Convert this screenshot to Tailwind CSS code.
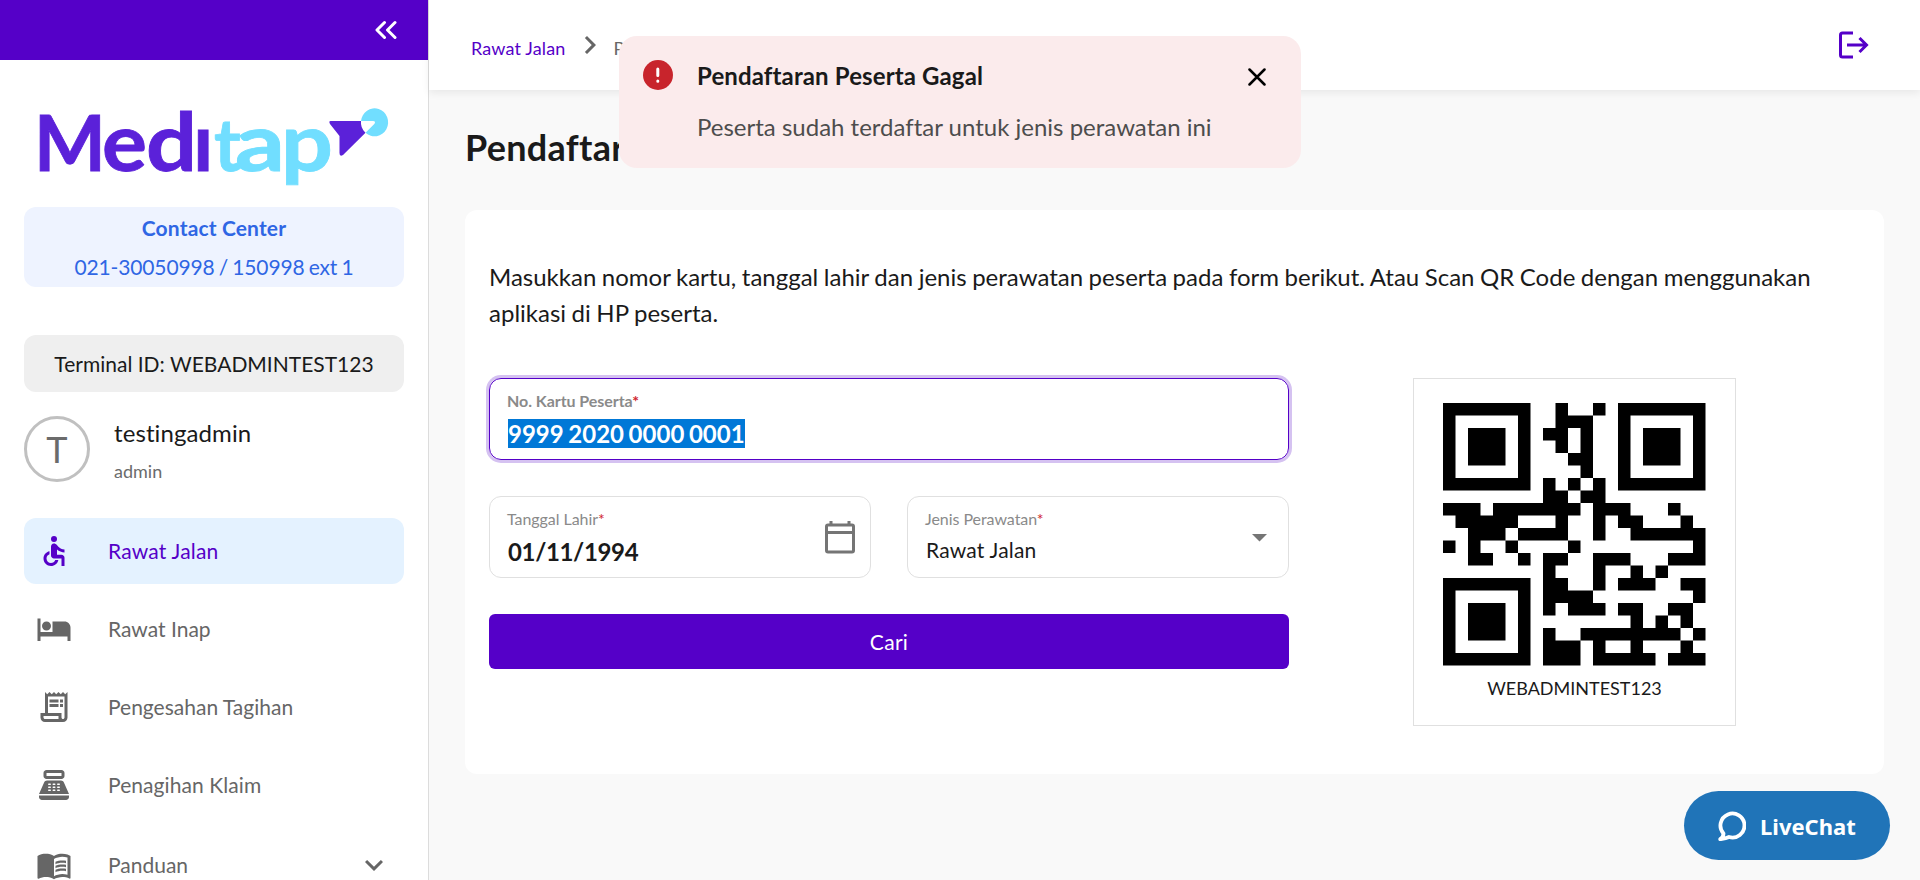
<!DOCTYPE html>
<html lang="id">
<head>
<meta charset="utf-8">
<title>Meditap - Pendaftaran Peserta</title>
<script src="https://cdn.jsdelivr.net/npm/@tailwindcss/browser@4"></script>
</head>
<body class="h-[880px] overflow-hidden bg-[#f9f9f9] font-['Lato',sans-serif] text-[#1a1a1a] [font-variant-ligatures:none]">
<div class="flex h-[880px]">
  <aside class="flex w-[429px] shrink-0 flex-col overflow-hidden border-r border-[#dcdcdc] bg-white">
    <div class="-mr-px flex h-[60px] shrink-0 items-center justify-end bg-[#5500c8] pr-8">
      <svg class="h-6 w-6" viewBox="0 0 24 24" fill="none" stroke="#fff" stroke-width="3" stroke-linecap="round" stroke-linejoin="round"><path d="M11.500 4.500 4 12l7.500 7.500M22 4.500 14.500 12l7.500 7.500"/></svg>
    </div>
    <div class="h-[147px] shrink-0">
      <svg class="h-[147px] w-[428px]" viewBox="0 60 428 147">
        <g font-family="Lato" font-weight="700" font-size="80" fill="#5b21d9" stroke="#5b21d9" stroke-width=".8">
          <text x="34" y="171" font-size="76">M</text>
          <text x="102" y="171" textLength="45" lengthAdjust="spacingAndGlyphs">e</text>
          <text x="146" y="171" textLength="51" lengthAdjust="spacingAndGlyphs">d</text>
          <text x="193" y="171">ı</text>
        </g>
        <g font-family="Lato" font-weight="700" font-size="80" fill="#71deff" stroke="#71deff" stroke-width=".8">
          <text x="214" y="171" font-size="72">t</text>
          <text x="235" y="171" textLength="50" lengthAdjust="spacingAndGlyphs">a</text>
          <text x="281" y="171" textLength="52" lengthAdjust="spacingAndGlyphs">p</text>
        </g>
        <path d="M330.500 121H361a14 14 0 0 0 4.500 11.800L343 155q-3.500 2-3.500-2V136l-9.500-12q-1.500-3 .5-3z" fill="#5b21d9"/>
        <path d="M361 121a13.600 14 0 1 1 4.500 11.800l9-9q1.500-2.800-1.500-2.800z" fill="#71deff"/>
      </svg>
    </div>
    <div class="mx-6 flex h-20 shrink-0 flex-col justify-center rounded-xl bg-[#eef3ff] text-center text-[21px] leading-[39px] text-[#2f66e4]">
      <div class="font-bold tracking-[0.15px]">Contact Center</div>
      <div class="tracking-[-0.15px] [word-spacing:-1px]">021-30050998 / 150998 ext 1</div>
    </div>
    <div class="mx-6 mt-12 h-[57px] shrink-0 rounded-xl bg-[#efefef] text-center text-[21px] leading-[57px]">Terminal ID: WEBADMINTEST123</div>
    <div class="mx-6 mt-6 flex h-[66px] shrink-0 items-center gap-6">
      <div class="h-[66px] w-[66px] rounded-full border-3 border-[#c0c0c0] text-center text-[36px] leading-[60px] text-[#6b6b6b]">T</div>
      <div class="pt-1.5">
        <div class="text-2xl leading-[38px] tracking-[0.1px]">testingadmin</div>
        <div class="text-lg leading-[38px] text-[#6b6b6b]">admin</div>
      </div>
    </div>
    <nav class="mx-6 mt-9 flex flex-col gap-3 text-[21px] text-[#666]">
      <a class="flex h-[66px] items-center gap-9 rounded-xl bg-[#e4f2ff] px-3 text-[#5500c8]">
        <svg class="h-9 w-9" viewBox="0 0 24 24" fill="currentColor"><circle cx="12" cy="4" r="2"/><path d="M19 13v-2c-1.540.02-3.090-.75-4.070-1.830l-1.290-1.430c-.17-.19-.38-.34-.61-.45-.01 0-.01-.01-.02-.01H13c-.35-.2-.75-.3-1.190-.26C10.760 7.110 10 8.040 10 9.090V15c0 1.100.9 2 2 2h5v5h2v-5.500c0-1.100-.9-2-2-2h-3v-3.450c1.290 1.070 3.250 1.940 5 1.950zm-6.170 5c-.41 1.160-1.520 2-2.830 2-1.660 0-3-1.340-3-3 0-1.310.84-2.410 2-2.830V12.100c-2.280.46-4 2.480-4 4.900 0 2.760 2.240 5 5 5 2.420 0 4.440-1.720 4.900-4h-2.070z"/></svg>
        <span class="tracking-[0.2px]">Rawat Jalan</span>
      </a>
      <a class="flex h-[66px] items-center gap-9 px-3">
        <svg class="h-9 w-9" viewBox="0 0 24 24" fill="currentColor"><path d="M7 13c1.660 0 3-1.340 3-3S8.660 7 7 7s-3 1.340-3 3 1.340 3 3 3zm12-6h-8v7H3V5H1v15h2v-3h18v3h2v-9c0-2.210-1.790-4-4-4z"/></svg>
        <span>Rawat Inap</span>
      </a>
      <a class="flex h-[66px] items-center gap-9 px-3">
        <svg class="h-9 w-9" viewBox="0 0 24 24" fill="currentColor"><path d="M19.500 3.500 18 2l-1.500 1.500L15 2l-1.500 1.500L12 2l-1.500 1.500L9 2 7.500 3.500 6 2v14H3v3c0 1.660 1.340 3 3 3h12c1.660 0 3-1.340 3-3V2l-1.500 1.500zM15 20H6c-.55 0-1-.45-1-1v-1h10v2zm4-1c0 .55-.45 1-1 1s-1-.45-1-1v-3H8V5h11v14zM9 7h6v2H9zM16 7h2v2h-2zM9 10h6v2H9zM16 10h2v2h-2z"/></svg>
        <span>Pengesahan Tagihan</span>
      </a>
      <a class="flex h-[66px] items-center gap-9 px-3">
        <svg class="h-9 w-9" viewBox="0 0 24 24"><path fill="currentColor" d="M17 2H7c-1.100 0-2 .9-2 2v2c0 1.100.9 2 2 2h10c1.100 0 2-.9 2-2V4c0-1.100-.9-2-2-2zm0 4H7V4h10v2zm3 16H4c-1.100 0-2-.9-2-2v-1h20v1c0 1.100-.9 2-2 2zm-1.470-11.810C18.210 9.470 17.490 9 16.700 9H7.300c-.79 0-1.510.47-1.830 1.190L2 18h20l-3.470-7.810z"/><path d="M8.500 11.500h1m2 0h1m2 0h1m-7 2h1m2 0h1m2 0h1m-7 2h1m2 0h1m2 0h1" stroke="#fff" stroke-linecap="round"/></svg>
        <span class="tracking-[0.08px]">Penagihan Klaim</span>
      </a>
      <a class="flex h-[69px] items-center gap-9 px-3">
        <svg class="h-9 w-9" viewBox="0 0 24 24" fill="currentColor"><path d="M21 5c-1.110-.35-2.330-.5-3.500-.5-1.950 0-4.050.4-5.500 1.500-1.450-1.100-3.550-1.500-5.500-1.500S2.450 4.900 1 6v14.650c0 .25.25.5.5.5.1 0 .15-.05.25-.05C3.100 20.450 5.050 20 6.500 20c1.950 0 4.050.4 5.500 1.500 1.350-.85 3.800-1.500 5.500-1.500 1.650 0 3.350.3 4.750 1.050.1.05.15.05.25.05.25 0 .5-.25.5-.5V6c-.6-.45-1.250-.75-2-1zm0 13.500c-1.100-.35-2.300-.5-3.500-.5-1.700 0-4.150.65-5.500 1.500V8c1.350-.85 3.800-1.500 5.500-1.500 1.200 0 2.400.15 3.500.5v11.500z"/><path d="M17.500 10.500c.88 0 1.730.09 2.500.26V9.240c-.79-.15-1.640-.24-2.500-.24-1.700 0-3.240.29-4.500.83v1.660c1.130-.64 2.700-.99 4.500-.99zM13 12.490v1.660c1.130-.64 2.700-.99 4.500-.99.88 0 1.730.09 2.500.26V11.900c-.79-.15-1.640-.24-2.500-.24-1.700 0-3.240.3-4.500.83zM17.500 14.330c-1.700 0-3.240.29-4.500.83v1.660c1.130-.64 2.700-.99 4.500-.99.88 0 1.730.09 2.500.26v-1.520c-.79-.16-1.640-.24-2.500-.24z"/></svg>
        <span class="grow">Panduan</span>
        <svg class="h-9 w-9" viewBox="0 0 24 24" fill="currentColor"><path d="M16.590 8.590 12 13.170 7.410 8.590 6 10l6 6 6-6z"/></svg>
      </a>
    </nav>
  </aside>

  <div class="flex grow flex-col">
    <header class="flex h-[90px] shrink-0 items-center justify-between bg-white pr-12 pl-[42px] shadow-[0_3px_8px_rgba(0,0,0,0.07)]">
      <div class="flex items-center text-lg leading-6">
        <a class="pt-[5px] tracking-[0.15px] text-[#5500c8]">Rawat Jalan</a>
        <svg class="mr-[6px] ml-[6px] h-9 w-9" viewBox="0 0 24 24" fill="#666"><path d="M10 6 8.590 7.410 13.170 12l-4.580 4.590L10 18l6-6z"/></svg>
        <span class="pt-[5px] text-[#666]">Pendaftaran Peserta</span>
      </div>
      <svg class="h-9 w-9" viewBox="0 0 36 36" fill="none" stroke="#5500c8" stroke-width="3"><path d="M17 6H6.500Q4.500 6 4.500 8V28Q4.500 30 6.500 30H17M11 18h20M23.500 11l7 7-7 7"/></svg>
    </header>
    <main class="pr-9 pl-9">
      <h1 class="pt-[35px] text-[36px] leading-[44px] font-bold tracking-[0.3px]">Pendaftaran Peserta</h1>
      <section class="mt-[41px] h-[564px] rounded-xl bg-white px-6 pt-[49px]">
        <p class="text-2xl leading-9 [word-spacing:-0.6px]">Masukkan nomor kartu, tanggal lahir dan jenis perawatan peserta pada form berikut. Atau Scan QR Code dengan menggunakan aplikasi di HP peserta.</p>
        <div class="mt-[47px] flex items-start gap-[124px]">
          <form class="flex w-[800px] flex-col gap-9">
            <div class="h-[82px] rounded-xl border border-[#5500c8] px-[18px] pt-[10px] shadow-[0_0_0_3px_#d5c2f1]">
              <div class="-ml-px text-base leading-6 font-bold tracking-[-0.05px] text-[#8a8a8a]">No. Kartu Peserta<span class="text-[#d0252e]">*</span></div>
              <div class="mt-[6px] w-fit bg-[#0078d7] text-2xl leading-[29px] font-bold text-white [word-spacing:-1.2px]">9999 2020 0000 0001</div>
            </div>
            <div class="flex gap-9">
              <div class="flex h-[82px] w-[382px] items-center justify-between rounded-xl border border-[#e0e0e0] pr-3 pl-[18px]">
                <div>
                  <div class="-mt-px -ml-px text-base leading-6 tracking-[-0.05px] text-[#8a8a8a]">Tanggal Lahir<span class="text-[#d0252e]">*</span></div>
                  <div class="mt-[6px] text-2xl leading-[29px] font-bold tracking-[-0.35px]">01/11/1994</div>
                </div>
                <svg class="h-9 w-9" viewBox="0 0 36 36" fill="none" stroke="#757575" stroke-width="3"><rect x="4.500" y="6" width="27" height="27" rx="1.500"/><path d="M4.500 13.500h27M9 2v4M27 2v4"/></svg>
              </div>
              <div class="flex h-[82px] w-[382px] items-center justify-between rounded-xl border border-[#e0e0e0] pr-[21px] pl-[18px]">
                <div>
                  <div class="-mt-px -ml-px text-base leading-6 tracking-[-0.05px] text-[#8a8a8a]">Jenis Perawatan<span class="text-[#d0252e]">*</span></div>
                  <div class="mt-[4px] mb-[2px] text-[21px] leading-[29px] tracking-[0.2px]">Rawat Jalan</div>
                </div>
                <svg class="mt-px h-[8px] w-[15px]" viewBox="0 0 15 8" fill="#757575"><path d="M0 0h15L7.500 7.500z"/></svg>
              </div>
            </div>
            <div class="h-[55px] rounded-md bg-[#5500c8] text-center text-[21px] leading-[55px] tracking-[0.3px] text-white">Cari</div>
          </form>
          <div class="flex h-[348px] w-[323px] flex-col items-center border border-[#e0e0e0] pt-6">
            <svg class="h-[262.500px] w-[262.500px]" viewBox="0 0 21 21" stroke="#000" fill="none"><path d="M.5.5h6v6h-6zM14.500.5h6v6h-6zM.5 14.500h6v6h-6z"/><path stroke="none" fill="#000" d="M2 2h3v3H2zM16 2h3v3h-3zM2 16h3v3H2z"/><path d="M9 .5h1m2 0h1M9 1.500h3M8 2.500h2m1 0h1M9 3.500h1m1 0h1M10 4.500h2M11 5.500h1M8 6.500h1m1 0h1m1 0h1M8 7.500h2m1 0h2M0 8.500h3m1 0h7m1 0h3m3 0h1M1 9.500h5m3 0h1m2 0h1m1 0h2m3 0h1M2 10.500h3m1 0h4m2 0h1m2 0h6M0 11.500h1m1 0h1m2 0h1m4 0h1m9 0h1M2 12.500h2m2 0h1m1 0h2m2 0h3m3 0h3M8 13.500h1m3 0h1m2 0h1m1 0h1M8 14.500h2m2 0h1m1 0h3m2 0h2M8 15.500h4m8 0h1M8 16.500h1m1 0h3m1 0h2m2 0h2M15 17.500h1m1 0h1m1 0h1M8 18.500h1m2 0h8m1 0h1M8 19.500h3m1 0h1m2 0h1m3 0h1M8 20.500h3m1 0h5m1 0h3"/></svg>
            <div class="mt-[10px] text-lg leading-6">WEBADMINTEST123</div>
          </div>
        </div>
      </section>
    </main>
  </div>
</div>

<div class="absolute top-9 left-[619px] flex h-[132px] w-[682px] rounded-[18px] bg-[#fbebec] px-6 pt-6">
  <svg class="h-[30px] w-[30px] shrink-0" viewBox="0 0 30 30"><circle cx="15" cy="15" r="15" fill="#c8242c"/><path d="M14.800 9v6.500M14.800 21v.2" stroke="#fff" stroke-width="3" stroke-linecap="round"/></svg>
  <div class="ml-6 grow pt-px text-2xl leading-[30px]">
    <div class="font-bold tracking-[0.12px]">Pendaftaran Peserta Gagal</div>
    <div class="mt-[21px] text-[#4d4d4d]">Peserta sudah terdaftar untuk jenis perawatan ini</div>
  </div>
  <svg class="mt-[8px] mr-[11px] h-[18px] w-[18px]" viewBox="0 0 18 18" stroke="#000" stroke-width="2.500" stroke-linecap="round"><path d="m1.500 1.500 15 15m0-15-15 15"/></svg>
</div>

<div class="absolute top-[791px] left-[1684px] flex h-[69px] w-[206px] items-center rounded-full bg-[#2074b8] pl-[34px] text-white">
  <svg class="h-[30px] w-[28px]" viewBox="0 0 28 30" fill="none" stroke="#fff" stroke-width="3.800" stroke-linejoin="round" stroke-linecap="round"><path d="M5.500 22.500A12 12 0 1 1 11 26Q8 27.500 2.200 28.200 5.500 26 5.500 22.500z"/></svg>
  <span class="ml-[14px] font-['Noto_Sans'] text-[22px] leading-8 font-bold">LiveChat</span>
</div>
</body>
</html>
